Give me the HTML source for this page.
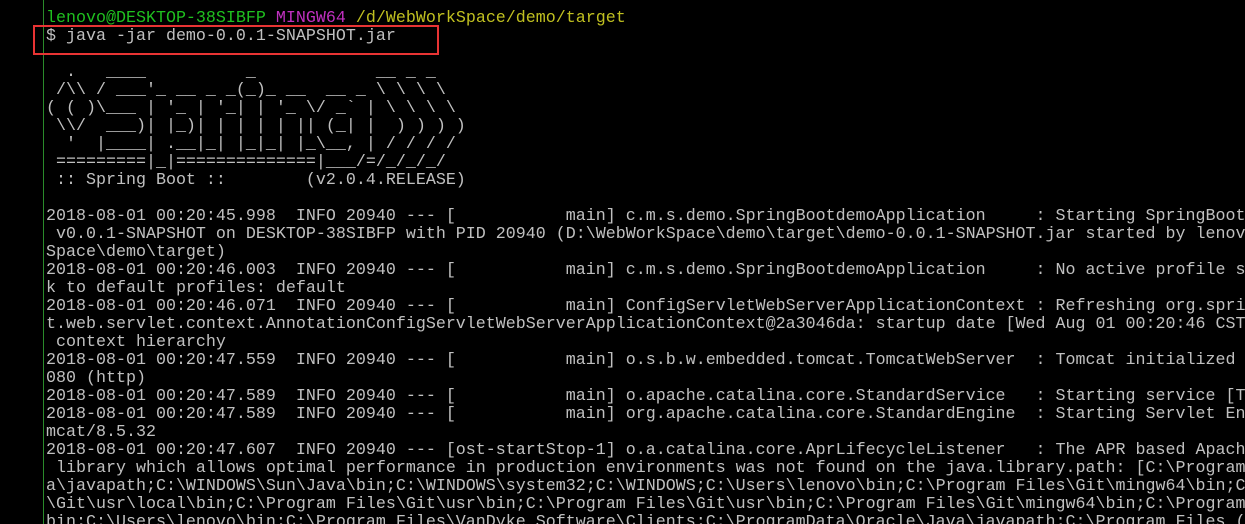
<!DOCTYPE html>
<html><head><meta charset="utf-8"><style>
html,body{margin:0;padding:0;background:#000;width:1245px;height:524px;overflow:hidden}
.t{position:absolute;left:46px;top:10px;width:1199px;height:514px;overflow:hidden;font-family:"Liberation Mono",monospace;font-size:16.67px;line-height:18px;color:#c0c0c0;white-space:pre;margin:0}
.g{color:#1fc01f}.m{color:#c030c0}.y{color:#c0c020}
.bar{position:absolute;left:43px;top:0;width:1px;height:524px;background:#2a8a2a}
.box{position:absolute;left:33px;top:25px;width:402px;height:26px;border:2px solid #e83434}
</style></head><body>
<div class="bar"></div>
<pre class="t"><span class="g">lenovo@DESKTOP-38SIBFP</span> <span class="m">MINGW64</span> <span class="y">/d/WebWorkSpace/demo/target</span>
$ java -jar demo-0.0.1-SNAPSHOT.jar

  .   ____          _            __ _ _
 /\\ / ___'_ __ _ _(_)_ __  __ _ \ \ \ \
( ( )\___ | '_ | '_| | '_ \/ _` | \ \ \ \
 \\/  ___)| |_)| | | | | || (_| |  ) ) ) )
  '  |____| .__|_| |_|_| |_\__, | / / / /
 =========|_|==============|___/=/_/_/_/
 :: Spring Boot ::        (v2.0.4.RELEASE)

2018-08-01 00:20:45.998  INFO 20940 --- [           main] c.m.s.demo.SpringBootdemoApplication     : Starting SpringBootdemoApplication
 v0.0.1-SNAPSHOT on DESKTOP-38SIBFP with PID 20940 (D:\WebWorkSpace\demo\target\demo-0.0.1-SNAPSHOT.jar started by lenovo in D:\WebWork
Space\demo\target)
2018-08-01 00:20:46.003  INFO 20940 --- [           main] c.m.s.demo.SpringBootdemoApplication     : No active profile set, falling bac
k to default profiles: default
2018-08-01 00:20:46.071  INFO 20940 --- [           main] ConfigServletWebServerApplicationContext : Refreshing org.springframework.boo
t.web.servlet.context.AnnotationConfigServletWebServerApplicationContext@2a3046da: startup date [Wed Aug 01 00:20:46 CST 2018]; root of
 context hierarchy
2018-08-01 00:20:47.559  INFO 20940 --- [           main] o.s.b.w.embedded.tomcat.TomcatWebServer  : Tomcat initialized with port(s): 8
080 (http)
2018-08-01 00:20:47.589  INFO 20940 --- [           main] o.apache.catalina.core.StandardService   : Starting service [Tomcat]
2018-08-01 00:20:47.589  INFO 20940 --- [           main] org.apache.catalina.core.StandardEngine  : Starting Servlet Engine: Apache To
mcat/8.5.32
2018-08-01 00:20:47.607  INFO 20940 --- [ost-startStop-1] o.a.catalina.core.AprLifecycleListener   : The APR based Apache Tomcat Native
 library which allows optimal performance in production environments was not found on the java.library.path: [C:\Program Files\Jav
a\javapath;C:\WINDOWS\Sun\Java\bin;C:\WINDOWS\system32;C:\WINDOWS;C:\Users\lenovo\bin;C:\Program Files\Git\mingw64\bin;C:\Program Files
\Git\usr\local\bin;C:\Program Files\Git\usr\bin;C:\Program Files\Git\usr\bin;C:\Program Files\Git\mingw64\bin;C:\Program Files\Git\usr\
bin;C:\Users\lenovo\bin;C:\Program Files\VanDyke Software\Clients;C:\ProgramData\Oracle\Java\javapath;C:\Program Files (x86)</pre>
<div class="box"></div>
</body></html>
